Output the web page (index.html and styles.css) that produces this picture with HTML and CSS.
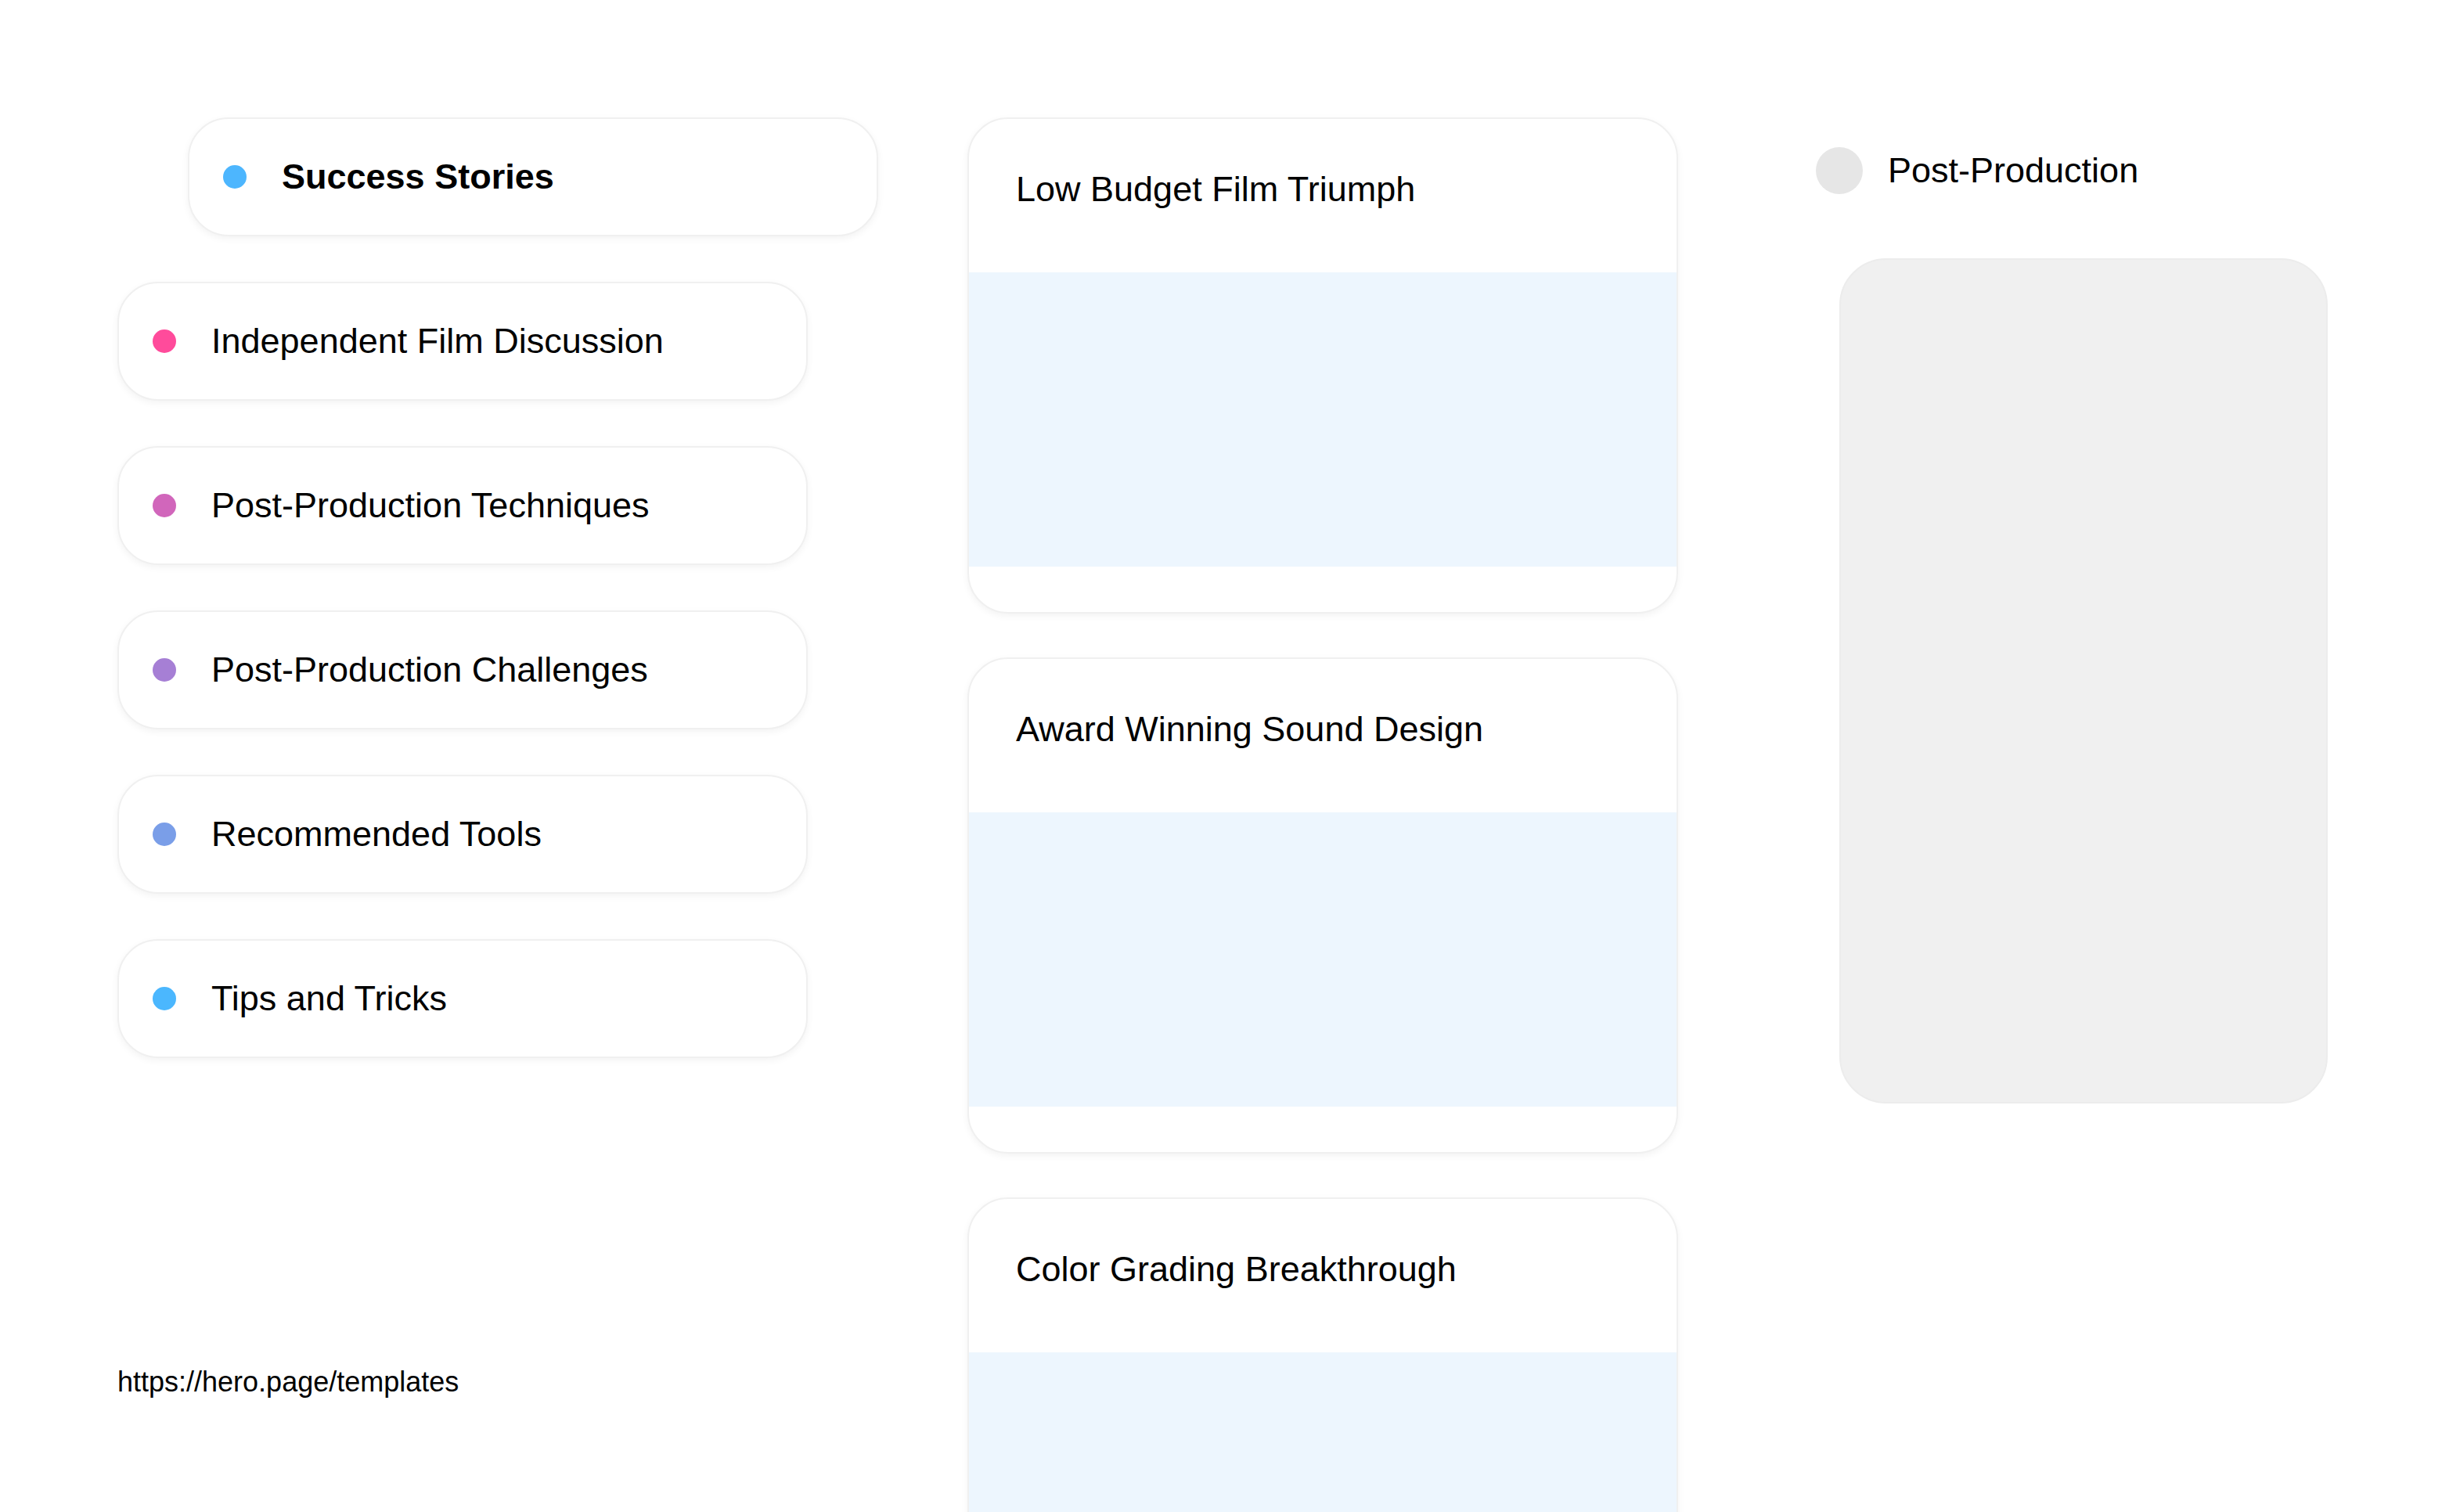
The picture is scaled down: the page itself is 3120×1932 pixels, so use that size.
FILE: index.html
```html
<!DOCTYPE html>
<html lang="en">
<head>
<meta charset="utf-8">
<title>Post-Production Success Stories</title>
<link rel="stylesheet" href="styles.css">
</head>
<body>
<div class="page">
  <nav class="topics">
    <div class="topic active"><span class="dot dot-blue"></span><span class="topic-label">Success Stories</span></div>
    <div class="topic"><span class="dot dot-pink"></span><span class="topic-label">Independent Film Discussion</span></div>
    <div class="topic"><span class="dot dot-orchid"></span><span class="topic-label">Post-Production Techniques</span></div>
    <div class="topic"><span class="dot dot-purple"></span><span class="topic-label">Post-Production Challenges</span></div>
    <div class="topic"><span class="dot dot-periwinkle"></span><span class="topic-label">Recommended Tools</span></div>
    <div class="topic"><span class="dot dot-sky"></span><span class="topic-label">Tips and Tricks</span></div>
    <div class="url">https://hero.page/templates</div>
  </nav>

  <main class="feed">
    <article class="card">
      <div class="card-head"><h3 class="card-title">Low Budget Film Triumph</h3></div>
      <div class="card-media"></div>
      <div class="card-foot"></div>
    </article>
    <article class="card">
      <div class="card-head"><h3 class="card-title">Award Winning Sound Design</h3></div>
      <div class="card-media"></div>
      <div class="card-foot"></div>
    </article>
    <article class="card">
      <div class="card-head"><h3 class="card-title">Color Grading Breakthrough</h3></div>
      <div class="card-media"></div>
      <div class="card-foot"></div>
    </article>
  </main>

  <aside class="side">
    <div class="side-head"><span class="avatar"></span><span class="side-title">Post-Production</span></div>
    <div class="side-panel"></div>
  </aside>
</div>
</body>
</html>
```
FILE: styles.css
```css
* { box-sizing: border-box; }

html, body {
  margin: 0;
  padding: 0;
  background: #ffffff;
}

body {
  font-family: "Liberation Sans", Arial, Helvetica, sans-serif;
  color: #000000;
  overflow: hidden;
  height: 1932px;
}

.page {
  display: flex;
  align-items: flex-start;
  padding: 150px 0 0 150px;
}

/* Left: topic list */
.topics {
  width: 970px;
  flex: none;
  display: flex;
  flex-direction: column;
  gap: 58px;
}

.topic {
  width: 882px;
  height: 152px;
  display: flex;
  align-items: center;
  padding-left: 43px;
  background: #ffffff;
  border: 2px solid #f0f0f0;
  border-radius: 52px;
  box-shadow: 0 3px 10px rgba(0, 0, 0, 0.05);
}

.topic.active {
  margin-left: 90px;
}

.dot {
  width: 30px;
  height: 30px;
  border-radius: 50%;
  flex: none;
  margin-right: 45px;
}

.dot-blue { background: #4db6fe; }
.dot-pink { background: #ff4b9b; }
.dot-orchid { background: #d166bb; }
.dot-purple { background: #a67fd5; }
.dot-periwinkle { background: #7a9ee8; }
.dot-sky { background: #4bb7fe; }

.topic-label {
  font-size: 45px;
  line-height: 52px;
}

.topic.active .topic-label {
  font-weight: bold;
}

.url {
  margin-top: 335px;
  font-size: 36px;
  line-height: 41px;
}

/* Middle: feed of cards */
.feed {
  width: 908px;
  flex: none;
  margin-left: 116px;
  display: flex;
  flex-direction: column;
  gap: 56px;
}

.card {
  background: #ffffff;
  border: 2px solid #f0f0f0;
  border-radius: 52px;
  box-shadow: 0 3px 10px rgba(0, 0, 0, 0.05);
  overflow: hidden;
}

.card-head {
  height: 196px;
  padding: 64px 60px 0;
}

.card-title {
  margin: 0;
  font-size: 45px;
  line-height: 52px;
  font-weight: normal;
}

.card-media {
  height: 376px;
  background: #edf6fe;
}

.card-foot {
  height: 58px;
}

/* Right: side panel */
.side {
  width: 680px;
  flex: none;
  margin-left: 176px;
  padding-top: 38px;
}

.side-head {
  display: flex;
  align-items: center;
  height: 60px;
}

.avatar {
  width: 60px;
  height: 60px;
  border-radius: 50%;
  background: #e6e6e6;
  flex: none;
  margin-right: 32px;
}

.side-title {
  font-size: 45px;
  line-height: 52px;
}

.side-panel {
  margin-top: 82px;
  margin-left: 30px;
  width: 624px;
  height: 1080px;
  background: #f0f0f0;
  border: 2px solid #ececec;
  border-radius: 60px;
}
```
